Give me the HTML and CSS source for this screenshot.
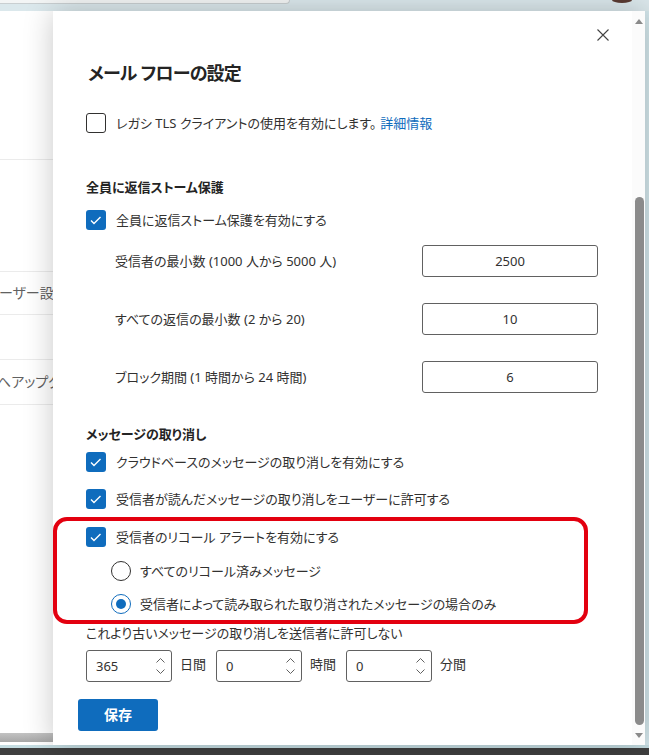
FILE: index.html
```html
<!DOCTYPE html>
<html lang="ja">
<head>
  <meta charset="UTF-8" />
  <title>メール フローの設定</title>
  <link rel="stylesheet" href="styles.css">
</head>
<body>
  <div class="window">

    <!-- ブラウザ上端 -->
    <div class="topbar">
      <div class="addr"></div>
      <div class="avatar"></div>
    </div>

    <div class="main">
      <!-- 背面のページ（パネルの下に一部だけ見える） -->
      <div class="backdrop">
        <div class="bd-row bd-r1"></div>
        <div class="bd-row bd-r2"></div>
        <div class="bd-row bd-r3">ーザー設定</div>
        <div class="bd-row bd-r4"></div>
        <div class="bd-row bd-r5">へアップグレード</div>
        <div class="bd-fill"></div>
        <div class="bd-hscroll"></div>
      </div>

      <!-- フライアウト パネル -->
      <section class="flyout">
        <div class="flyout-body">
          <div class="close-row">
            <button class="close-btn" aria-label="閉じる">
              <svg width="12" height="12" viewBox="0 0 12 12">
                <path d="M0.5 0.5 L11.5 11.5 M11.5 0.5 L0.5 11.5" stroke="#424242" stroke-width="1.1" fill="none"/>
              </svg>
            </button>
          </div>

          <h1 class="title">メール フローの設定</h1>

          <label class="check check-legacy">
            <span class="box"></span>
            <span>レガシ TLS クライアントの使用を有効にします。<a href="#" class="link">詳細情報</a></span>
          </label>

          <h2 class="section-head head-storm">全員に返信ストーム保護</h2>
          <label class="check check-storm">
            <span class="box checked">
              <svg width="20" height="20" viewBox="0 0 20 20"><path d="M5 10.5 L8 13.5 L14.5 7" stroke="#fff" stroke-width="1.4" fill="none"/></svg>
            </span>
            <span>全員に返信ストーム保護を有効にする</span>
          </label>

          <div class="field-row row-first">
            <span class="field-label">受信者の最小数 (1000 人から 5000 人)</span>
            <input class="num-input" type="text" value="2500" readonly>
          </div>
          <div class="field-row">
            <span class="field-label">すべての返信の最小数 (2 から 20)</span>
            <input class="num-input" type="text" value="10" readonly>
          </div>
          <div class="field-row">
            <span class="field-label">ブロック期間 (1 時間から 24 時間)</span>
            <input class="num-input" type="text" value="6" readonly>
          </div>

          <h2 class="section-head head-recall">メッセージの取り消し</h2>
          <label class="check check-cloud">
            <span class="box checked">
              <svg width="20" height="20" viewBox="0 0 20 20"><path d="M5 10.5 L8 13.5 L14.5 7" stroke="#fff" stroke-width="1.4" fill="none"/></svg>
            </span>
            <span>クラウドベースのメッセージの取り消しを有効にする</span>
          </label>
          <label class="check check-read">
            <span class="box checked">
              <svg width="20" height="20" viewBox="0 0 20 20"><path d="M5 10.5 L8 13.5 L14.5 7" stroke="#fff" stroke-width="1.4" fill="none"/></svg>
            </span>
            <span>受信者が読んだメッセージの取り消しをユーザーに許可する</span>
          </label>

          <!-- 赤枠で囲まれた部分 -->
          <div class="highlight">
            <label class="check">
              <span class="box checked">
                <svg width="20" height="20" viewBox="0 0 20 20"><path d="M5 10.5 L8 13.5 L14.5 7" stroke="#fff" stroke-width="1.4" fill="none"/></svg>
              </span>
              <span>受信者のリコール アラートを有効にする</span>
            </label>
            <label class="radio radio-all">
              <span class="circle"></span>
              <span>すべてのリコール済みメッセージ</span>
            </label>
            <label class="radio radio-read">
              <span class="circle selected"></span>
              <span>受信者によって読み取られた取り消されたメッセージの場合のみ</span>
            </label>
          </div>

          <p class="older-text">これより古いメッセージの取り消しを送信者に許可しない</p>
          <div class="spin-row">
            <div class="spin"><span>365</span><span class="chev"><svg width="9" height="20" viewBox="0 0 9 20"><path d="M0.5 6.5 L4.5 2.5 L8.5 6.5 M0.5 13.5 L4.5 17.5 L8.5 13.5" stroke="#616161" stroke-width="1" fill="none"/></svg></span></div>
            <span class="unit">日間</span>
            <div class="spin"><span>0</span><span class="chev"><svg width="9" height="20" viewBox="0 0 9 20"><path d="M0.5 6.5 L4.5 2.5 L8.5 6.5 M0.5 13.5 L4.5 17.5 L8.5 13.5" stroke="#616161" stroke-width="1" fill="none"/></svg></span></div>
            <span class="unit">時間</span>
            <div class="spin"><span>0</span><span class="chev"><svg width="9" height="20" viewBox="0 0 9 20"><path d="M0.5 6.5 L4.5 2.5 L8.5 6.5 M0.5 13.5 L4.5 17.5 L8.5 13.5" stroke="#616161" stroke-width="1" fill="none"/></svg></span></div>
            <span class="unit">分間</span>
          </div>

          <button class="save-btn">保存</button>
        </div>

        <!-- 縦スクロールバー -->
        <div class="scrollbar">
          <span class="arrow-up"></span>
          <div class="thumb"></div>
          <span class="arrow-down"></span>
        </div>
      </section>

      <div class="edge"></div>
    </div>

    <div class="bottom-line"></div>
    <div class="taskbar"></div>
  </div>
</body>
</html>
```

FILE: styles.css
```css
/*――――――――――――――――――――――――――――
  全体
――――――――――――――――――――――――――――*/
* {
  box-sizing: border-box;
}
body {
  margin: 0;
  font-family: "Noto Sans", "Noto Sans CJK JP", sans-serif;
  font-size: 13px;
  line-height: 20px;
  color: #323130;
  font-feature-settings: "palt";
  background: #fff;
}
.window {
  width: 649px;
  height: 755px;
  display: flex;
  flex-direction: column;
  overflow: hidden;
}

/*――――――――――――――――――――――――――――
  ブラウザ上端・下端
――――――――――――――――――――――――――――*/
.topbar {
  height: 11px;
  flex: none;
  display: flex;
  justify-content: space-between;
  background: #dbe8ec;
}
.addr {
  width: 290px;
  height: 4px;
  background: #f3f5f5;
  border-bottom: 1px solid #c9cfd1;
  border-right: 1px solid #c9cfd1;
  border-bottom-right-radius: 4px;
}
.avatar {
  width: 20px;
  height: 3px;
  margin-right: 17px;
  background: #5b3b33;
  border-radius: 0 0 10px 10px / 0 0 3px 3px;
}
.bottom-line {
  height: 3px;
  flex: none;
  background: #c4dce1;
}
.taskbar {
  flex: 1;
  background: #3f3f3f;
}

.main {
  height: 734px;
  flex: none;
  display: flex;
}

/*――――――――――――――――――――――――――――
  背面のページ
――――――――――――――――――――――――――――*/
.backdrop {
  width: 53px;
  flex: none;
  display: flex;
  flex-direction: column;
  overflow: hidden;
  white-space: nowrap;
  color: #616161;
  font-size: 14px;
}
.bd-row {
  border-bottom: 1px solid #ebebeb;
  display: flex;
  align-items: center;
}
.bd-r1 { height: 149px; }
.bd-r2 { height: 112px; }
.bd-r3 { height: 43px; margin-left: -1px; }
.bd-r4 { height: 45px; }
.bd-r5 { height: 45px; margin-left: -3px; }
.bd-fill {
  flex: 1;
}
.bd-hscroll {
  height: 9px;
  margin-bottom: 3px;
  background: linear-gradient(#c2c2c2, #a7a7a7);
}

/*――――――――――――――――――――――――――――
  フライアウト
――――――――――――――――――――――――――――*/
.flyout {
  width: 592px;
  flex: none;
  display: flex;
  background: #fff;
  box-shadow: 0 0 28px rgba(0, 0, 0, 0.22);
  position: relative;
}
.flyout-body {
  width: 579px;
  padding: 0 34px 0 33px;
  display: flex;
  flex-direction: column;
  align-items: flex-start;
}
.close-row {
  align-self: stretch;
  display: flex;
  justify-content: flex-end;
  padding-top: 18px;
  margin-right: -11px;
}
.close-btn {
  border: none;
  background: none;
  padding: 0;
  width: 12px;
  height: 12px;
  display: block;
}
.close-btn svg {
  display: block;
}
.title {
  margin: 18px 0 0 2px;
  font-size: 18px;
  line-height: 28px;
  letter-spacing: -0.8px;
  font-weight: 700;
  color: #242424;
}
.link {
  color: #0f6cbd;
  text-decoration: none;
  margin-left: 4px;
}

/* チェックボックス・ラジオ */
.check,
.radio {
  display: flex;
  align-items: center;
  gap: 10px;
  line-height: 20px;
  white-space: nowrap;
}
.box {
  width: 20px;
  height: 20px;
  flex: none;
  border: 1px solid #323130;
  border-radius: 3px;
  display: block;
}
.box.checked {
  border: none;
  background: #0f6cbd;
}
.box svg {
  display: block;
}
.circle {
  width: 20px;
  height: 20px;
  flex: none;
  border: 1px solid #323130;
  border-radius: 50%;
  display: flex;
  align-items: center;
  justify-content: center;
}
.circle.selected {
  border-color: #0f6cbd;
}
.circle.selected::after {
  content: "";
  width: 10px;
  height: 10px;
  border-radius: 50%;
  background: #0f6cbd;
}

.check-legacy { margin-top: 26px; }
.section-head {
  margin: 0;
  font-size: 13px;
  line-height: 20px;
  font-weight: 700;
  color: #242424;
}
.head-storm { margin-top: 44px; }
.check-storm { margin-top: 13px; }

/* 数値入力の行 */
.field-row {
  align-self: stretch;
  display: flex;
  justify-content: space-between;
  align-items: center;
  margin-top: 26px;
  padding-left: 29px;
}
.field-row.row-first { margin-top: 15px; }
.num-input {
  width: 176px;
  height: 32px;
  border: 1px solid #616161;
  border-radius: 3px;
  text-align: center;
  font: inherit;
  color: #323130;
  outline: none;
}

.head-recall { margin-top: 31px; }
.check-cloud { margin-top: 8px; }
.check-read { margin-top: 17px; }

/* 赤枠 */
.highlight {
  align-self: stretch;
  margin: 8px 10px 0 -33px;
  padding: 6px 0 6px 29px;
  border: 4px solid #e3000f;
  border-radius: 14px;
}
.radio {
  margin-left: 25px;
  gap: 9px;
}
.radio-all { margin-top: 14px; }
.radio-read { margin-top: 13px; }

.older-text {
  margin: 0;
  line-height: 18px;
}

/* スピン入力 */
.spin-row {
  display: flex;
  align-items: center;
  gap: 8px;
  margin-top: 8px;
}
.spin {
  width: 86px;
  height: 32px;
  border: 1px solid #616161;
  border-radius: 3px;
  display: flex;
  align-items: center;
  justify-content: space-between;
  padding: 0 6px 0 9px;
}
.chev svg {
  display: block;
}
.unit {
  width: 28px;
  margin-top: -4px;
}

.save-btn {
  margin: 17px 0 0 -8px;
  width: 80px;
  height: 32px;
  border: none;
  border-radius: 3px;
  background: #0f6cbd;
  color: #fff;
  font: inherit;
  font-weight: 700;
  font-size: 14px;
}

/*――――――――――――――――――――――――――――
  スクロールバー
――――――――――――――――――――――――――――*/
.scrollbar {
  width: 13px;
  flex: none;
  display: flex;
  flex-direction: column;
  align-items: center;
  background: #fbfbfb;
  padding-left: 1px;
}
.arrow-up {
  margin-top: 8px;
  border-left: 4px solid transparent;
  border-right: 4px solid transparent;
  border-bottom: 5px solid #8a8a8a;
}
.thumb {
  width: 9px;
  height: 528px;
  margin-top: 173px;
  border-radius: 5px;
  background: #8b8b8b;
}
.arrow-down {
  margin-top: 8px;
  border-left: 4px solid transparent;
  border-right: 4px solid transparent;
  border-top: 5px solid #8a8a8a;
}

.edge {
  flex: 1;
  background: #d3e6eb;
}
```
